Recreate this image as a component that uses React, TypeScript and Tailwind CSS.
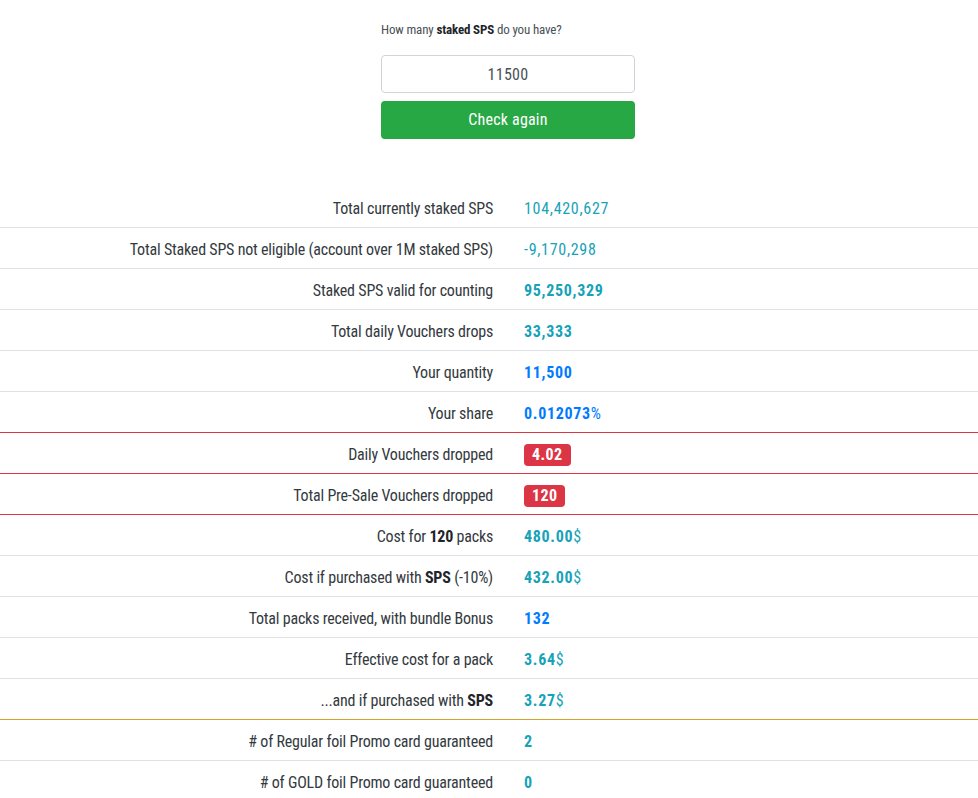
import React from 'react';

type Row = {
  label: React.ReactNode;
  value: React.ReactNode;
  line?: 'none' | 'gray' | 'red' | 'gold';
};

const teal = 'text-[#17a2b8]';
const blue = 'text-[#007bff]';

const Badge: React.FC<{ children: React.ReactNode }> = ({ children }) => (
  <span className="inline-block rounded-[4px] bg-[#dc3545] px-[8px] py-[1px] text-[16px] font-bold leading-[20px] tracking-[0.4px] text-white">
    {children}
  </span>
);

const rows: Row[] = [
  { label: 'Total currently staked SPS', value: <span className={teal}>104,420,627</span>, line: 'none' },
  {
    label: 'Total Staked SPS not eligible (account over 1M staked SPS)',
    value: <span className={teal}>-9,170,298</span>,
  },
  { label: 'Staked SPS valid for counting', value: <b className={teal}>95,250,329</b> },
  { label: 'Total daily Vouchers drops', value: <b className={teal}>33,333</b> },
  { label: 'Your quantity', value: <b className={blue}>11,500</b> },
  {
    label: 'Your share',
    value: (
      <span className={blue}>
        <b>0.012073</b>%
      </span>
    ),
  },
  { label: 'Daily Vouchers dropped', value: <Badge>4.02</Badge>, line: 'red' },
  { label: 'Total Pre-Sale Vouchers dropped', value: <Badge>120</Badge>, line: 'red' },
  {
    label: (
      <>
        Cost for <b className="text-[#212529]">120</b> packs
      </>
    ),
    value: (
      <span className={teal}>
        <b>480.00</b>$
      </span>
    ),
    line: 'red',
  },
  {
    label: (
      <>
        Cost if purchased with <b className="text-[#212529]">SPS</b> (-10%)
      </>
    ),
    value: (
      <span className={teal}>
        <b>432.00</b>$
      </span>
    ),
  },
  { label: 'Total packs received, with bundle Bonus', value: <b className={blue}>132</b> },
  {
    label: 'Effective cost for a pack',
    value: (
      <span className={teal}>
        <b>3.64</b>$
      </span>
    ),
  },
  {
    label: (
      <>
        ...and if purchased with <b className="text-[#212529]">SPS</b>
      </>
    ),
    value: (
      <span className={teal}>
        <b>3.27</b>$
      </span>
    ),
  },
  { label: '# of Regular foil Promo card guaranteed', value: <b className={teal}>2</b>, line: 'gold' },
  { label: '# of GOLD foil Promo card guaranteed', value: <b className={teal}>0</b> },
];

const lineClass = (line: Row['line']) => {
  if (line === 'none') return 'border-t border-transparent';
  if (line === 'red') return 'border-t border-[#dc3545]';
  if (line === 'gold') return 'border-t border-[#d4a22a]';
  return 'border-t border-[#dee2e6]';
};

export default function App() {
  return (
    <div className="min-h-[798px] w-full bg-white font-[Roboto,sans-serif] text-[#343a40] [font-stretch:condensed]">
      <div className="flex flex-col items-center pl-[38px] pt-[22px]">
        <div className="w-[254px]">
          <p className="text-[13px] leading-[16px] tracking-[-0.15px] text-[#495057]">
            How many <b className="text-[#212529]">staked SPS</b> do you have?
          </p>
          <input
            defaultValue="11500"
            className="mt-[17px] block h-[38px] w-full rounded-[4px] border border-[#ced4da] bg-white text-center text-[16px] tracking-[0.3px] text-[#495057] outline-none"
          />
          <button className="mt-[8px] block h-[38px] w-full rounded-[4px] bg-[#28a745] text-[16px] tracking-[0.2px] text-white">
            Check again
          </button>
        </div>
      </div>

      <div className="mt-[47px] w-full">
        {rows.map((row, i) => (
          <div key={i} className={`grid grid-cols-[505px_1fr] ${lineClass(row.line)}`}>
            <div className="flex h-[40px] items-center justify-end pr-[12px] pt-[3px] text-right text-[16px] tracking-[-0.2px] text-[#343a40]">
              <span>{row.label}</span>
            </div>
            <div className="flex h-[40px] items-center pl-[19px] pt-[3px] text-[16px] tracking-[0.7px]">{row.value}</div>
          </div>
        ))}
      </div>
    </div>
  );
}
